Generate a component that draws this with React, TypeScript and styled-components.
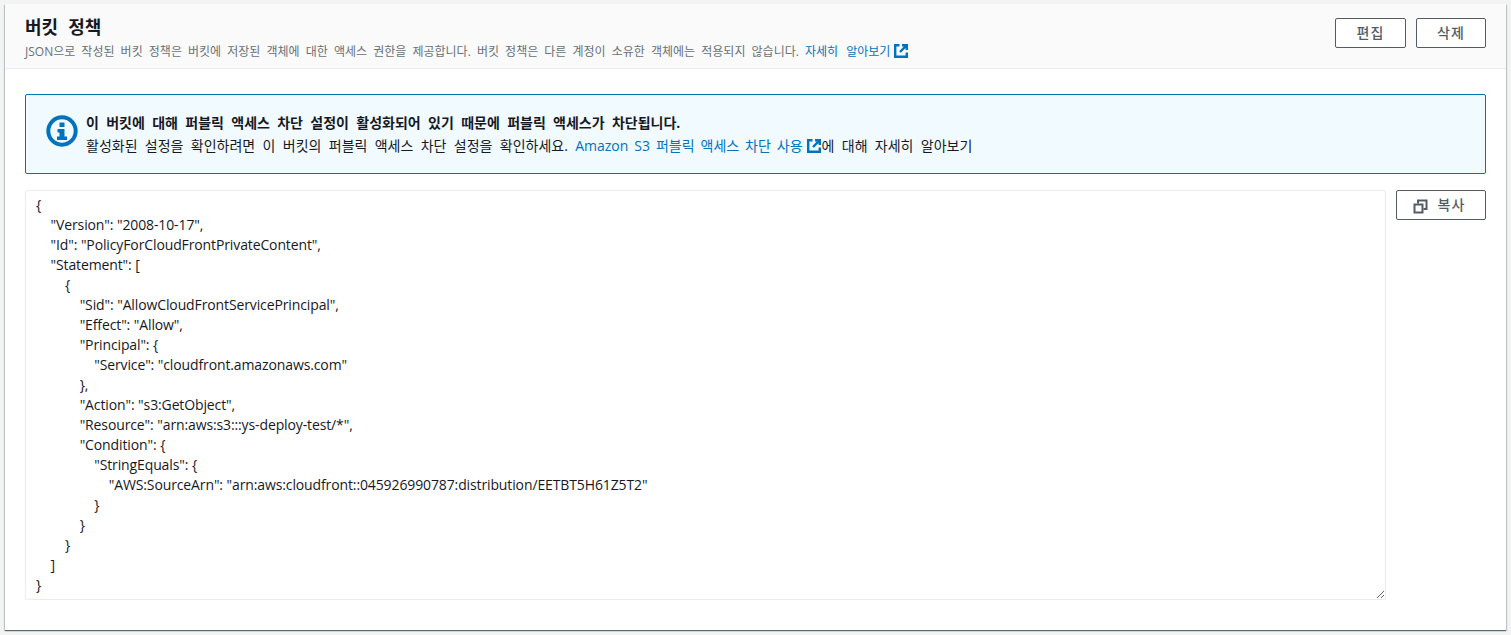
import styled, { createGlobalStyle } from 'styled-components'

const policy = `{
    "Version": "2008-10-17",
    "Id": "PolicyForCloudFrontPrivateContent",
    "Statement": [
        {
            "Sid": "AllowCloudFrontServicePrincipal",
            "Effect": "Allow",
            "Principal": {
                "Service": "cloudfront.amazonaws.com"
            },
            "Action": "s3:GetObject",
            "Resource": "arn:aws:s3:::ys-deploy-test/*",
            "Condition": {
                "StringEquals": {
                    "AWS:SourceArn": "arn:aws:cloudfront::045926990787:distribution/EETBT5H61Z5T2"
                }
            }
        }
    ]
}`

const ExternalIcon: React.FC = () => (
  <ExternalSvg viewBox="0 0 16 16">
    <path d="M6.5 2.2H2.2v11.6h11.6V9.5" />
    <path d="M9 2.2h4.8V7M13.8 2.2L7 9" />
  </ExternalSvg>
)

const App: React.FC = () => (
  <Page>
    <GlobalStyle />
    <Card>
      <Header>
        <HeaderText>
          <Title>버킷 정책</Title>
          <Description>
            JSON으로 작성된 버킷 정책은 버킷에 저장된 객체에 대한 액세스 권한을 제공합니다. 버킷 정책은 다른 계정이 소유한 객체에는 적용되지 않습니다.{' '}
            <Anchor $wordSpacing={5}>자세히 알아보기</Anchor><ExternalIcon />
          </Description>
        </HeaderText>
        <Actions>
          <Button $width={71}>편집</Button>
          <Button $width={70}>삭제</Button>
        </Actions>
      </Header>
      <Body>
        <Alert>
          <InfoIcon viewBox="0 0 32 32">
            <circle cx="16" cy="16" r="13.7" />
            <rect x="13.5" y="7.5" width="5" height="4.5" />
            <path d="M11.5 14h7v7.5H21V25H11v-3.5h2.5V17.500h-2z" />
          </InfoIcon>
          <AlertText>
            <AlertTitle>이 버킷에 대해 퍼블릭 액세스 차단 설정이 활성화되어 있기 때문에 퍼블릭 액세스가 차단됩니다.</AlertTitle>
            <div>
              활성화된 설정을 확인하려면 이 버킷의 퍼블릭 액세스 차단 설정을 확인하세요.{' '}
              <Anchor $wordSpacing={2.3}>Amazon S3 퍼블릭 액세스 차단 사용</Anchor><ExternalIcon />에 대해 자세히 알아보기
            </div>
          </AlertText>
        </Alert>
        <PolicyRow>
          <PolicyText readOnly defaultValue={policy} spellCheck={false} />
          <CopyButton $width={90}>
            <CopyIcon viewBox="0 0 16 16">
              <rect x="1.500" y="5.500" width="8" height="8" />
              <path d="M5 4.500V1.500H13.500V10H10.500" />
            </CopyIcon>
            복사
          </CopyButton>
        </PolicyRow>
      </Body>
    </Card>
  </Page>
)

export default App

const fonts = `"Open Sans", "Noto Sans CJK KR", sans-serif`

const GlobalStyle = createGlobalStyle`
  html, body {
    margin: 0;
    padding: 0;
    background: #f2f3f3;
  }
  * {
    box-sizing: border-box;
  }
`
const Page = styled.div`
  height: 635px;
  padding: 4px 5px 5px 5px;
  font-family: ${fonts};
  font-size: 14px;
  line-height: 20px;
  color: #16191f;
`
const Card = styled.section`
  height: 626px;
  background: #ffffff;
  box-shadow: 0 1px 1px 0 rgba(0, 28, 36, 0.5), 1px 1px 1px 0 rgba(0, 28, 36, 0.15), -1px 1px 1px 0 rgba(0, 28, 36, 0.15);
`
const Header = styled.header`
  display: flex;
  justify-content: space-between;
  height: 65px;
  padding: 12px 20px 0 20px;
  background: #fafafa;
  border-bottom: 1px solid #eaeded;
`
const HeaderText = styled.div`
  display: flex;
  flex-direction: column;
`
const Title = styled.h2`
  margin: 0;
  font-size: 18px;
  line-height: 22px;
  font-weight: 700;
  word-spacing: 5.5px;
`
const Description = styled.p`
  margin: 5px 0 0 0;
  font-size: 12px;
  line-height: 16px;
  word-spacing: 3px;
  color: #687078;
`
const Anchor = styled.a<{ $wordSpacing: number }>`
  color: #0073bb;
  word-spacing: ${p => p.$wordSpacing}px;
`
const ExternalSvg = styled.svg`
  display: inline-block;
  width: 16px;
  height: 16px;
  margin-left: 3px;
  vertical-align: -3px;
  fill: none;
  stroke: #0073bb;
  stroke-width: 2.4;
`
const Actions = styled.div`
  display: flex;
  gap: 10px;
  padding-top: 2px;
`
const Button = styled.button<{ $width: number }>`
  display: flex;
  align-items: center;
  justify-content: center;
  flex: none;
  width: ${p => p.$width}px;
  height: 30px;
  padding: 0 0 3px 0;
  background: #ffffff;
  border: 1px solid #545b64;
  border-radius: 2px;
  font-family: ${fonts};
  font-size: 14px;
  font-weight: 500;
  letter-spacing: 1px;
  color: #545b64;
`
const CopyButton = styled(Button)`
  gap: 8.5px;
  padding-right: 3.500px;
`
const CopyIcon = styled.svg`
  width: 16px;
  height: 16px;
  margin-top: 6px;
  fill: none;
  stroke: #545b64;
  stroke-width: 2;
`
const Body = styled.div`
  display: flex;
  flex-direction: column;
  gap: 16px;
  padding: 25px 20px 0 20px;
`
const Alert = styled.div`
  display: flex;
  align-items: flex-start;
  height: 80px;
  padding: 16px 20px 0 20px;
  background: #f1faff;
  border: 1px solid #0073bb;
  border-radius: 2px;
`
const InfoIcon = styled.svg`
  flex: none;
  width: 32px;
  height: 32px;
  margin-top: 4px;
  margin-right: 8px;
  circle {
    fill: none;
    stroke: #0073bb;
    stroke-width: 4;
  }
  rect, path {
    fill: #0073bb;
  }
`
const AlertText = styled.div`
  display: flex;
  flex-direction: column;
  line-height: 23px;
  word-spacing: 3.7px;
`
const AlertTitle = styled.div`
  font-weight: 700;
`
const PolicyRow = styled.div`
  display: flex;
  align-items: flex-start;
  gap: 10px;
`
const PolicyText = styled.textarea`
  flex: 1;
  height: 410px;
  padding: 4px 10px;
  background: #ffffff;
  border: 1px solid #eaeded;
  border-radius: 2px;
  outline: none;
  resize: vertical;
  overflow: hidden;
  font-family: ${fonts};
  font-size: 14px;
  line-height: 20px;
  letter-spacing: -0.12px;
  word-spacing: 0.12px;
  color: #16191f;
`
